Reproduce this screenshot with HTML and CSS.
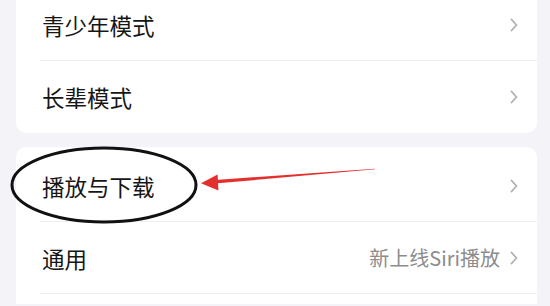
FILE: index.html
```html
<!DOCTYPE html>
<html lang="zh-CN">
<head>
  <meta charset="UTF-8" />
  <title>设置</title>
  <link rel="stylesheet" href="styles.css">
</head>
<body>

  <div class="page">
    <div class="card card-first">
      <div class="row">
        <span class="label">青少年模式</span>
        <span class="extra">
          <svg class="chevron" viewBox="0 0 8 14"><path d="M1.5 1.5 L6.5 7 L1.5 12.5"/></svg>
        </span>
      </div>
      <div class="row">
        <span class="label">长辈模式</span>
        <span class="extra">
          <svg class="chevron" viewBox="0 0 8 14"><path d="M1.5 1.5 L6.5 7 L1.5 12.5"/></svg>
        </span>
      </div>
    </div>

    <div class="card card-second">
      <div class="row">
        <span class="label">播放与下载</span>
        <span class="extra">
          <svg class="chevron" viewBox="0 0 8 14"><path d="M1.5 1.5 L6.5 7 L1.5 12.5"/></svg>
        </span>
      </div>
      <div class="row">
        <span class="label">通用</span>
        <span class="extra">
          <span class="hint">新上线Siri播放</span>
          <svg class="chevron" viewBox="0 0 8 14"><path d="M1.5 1.5 L6.5 7 L1.5 12.5"/></svg>
        </span>
      </div>
    </div>
  </div>

  <!-- hand-drawn annotation over the screenshot -->
  <svg class="markup" viewBox="0 0 550 306">
    <ellipse cx="104" cy="185" rx="92" ry="37" fill="none" stroke="#111" stroke-width="3"/>
    <polygon points="375,168.7 375,169.3 214.8,183.6 215.2,179.9" fill="#e3302e"/>
    <polygon points="201,183.2 217.6,174.6 218.4,190.4" fill="#e3302e"/>
  </svg>

</body>
</html>
```

FILE: styles.css
```css
body {
  margin: 0;
  background: #f3f3f8;
  font-family: "Noto Sans CJK SC", "Noto Sans", sans-serif;
  overflow: hidden;
}
.page {
  padding: 0 13px 0 16px;
}
.card {
  background: #fff;
  border-radius: 10px;
}
.card-first {
  margin-top: -11px;
  border-radius: 0 0 10px 10px;
}
.card-second {
  margin-top: 14px;
  padding: 3px 0 10px;
  border-radius: 10px 10px 0 0;
}
.row {
  display: flex;
  align-items: center;
  justify-content: space-between;
  height: 72px;
  box-sizing: border-box;
  margin-left: 24px;
  padding: 0 19px 0 2px;
  border-bottom: 1px solid #efeff1;
}
.card-first .row:last-child {
  border-bottom: none;
}
.label {
  font-size: 22.5px;
  color: #161616;
}
.extra {
  display: flex;
  align-items: center;
  gap: 10px;
}
.hint {
  font-size: 20px;
  color: #8c8c8c;
}
.chevron {
  width: 8px;
  height: 14px;
  fill: none;
  stroke: #b0b0b4;
  stroke-width: 1.8;
  stroke-linecap: round;
  stroke-linejoin: round;
}
.markup {
  position: absolute;
  top: 0;
  left: 0;
  width: 550px;
  height: 306px;
  pointer-events: none;
}
```
